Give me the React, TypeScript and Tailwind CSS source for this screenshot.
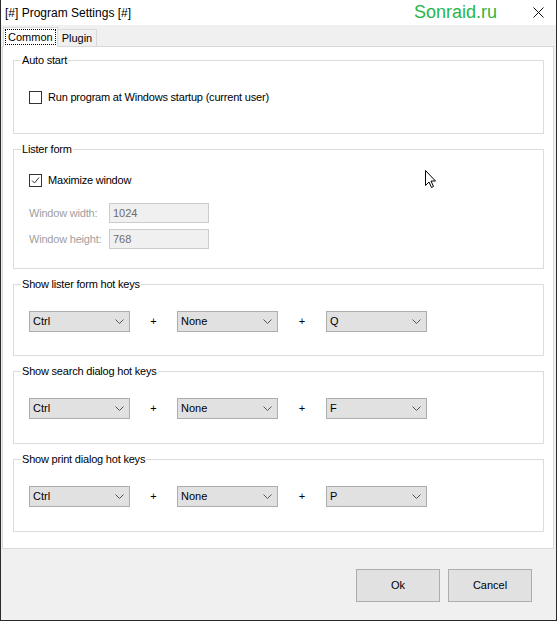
import React from 'react';

const font = { fontFamily: '"Liberation Sans", Arial, sans-serif' };

// Win32-like group box
const GroupBox: React.FC<{ title: string; h: string; children: React.ReactNode }> = ({ title, h, children }) => (
  <fieldset className="border border-[#dcdcdc]">
    <legend className="ml-[7px] px-[1px] text-[11px] leading-[14px] tracking-[-0.2px] text-black">{title}</legend>
    <div className={`${h} px-[15px]`}>{children}</div>
  </fieldset>
);

const CheckBox: React.FC<{ label: string; checked?: boolean }> = ({ label, checked }) => (
  <div className="flex items-center gap-[6px]">
    <div className="w-[13px] h-[13px] border border-[#333] bg-white flex items-center justify-center">
      {checked && (
        <svg width="11" height="11" viewBox="0 0 11 11">
          <path d="M2 5.5 L4.5 8 L9 2.5" stroke="#333" strokeWidth="1" fill="none" />
        </svg>
      )}
    </div>
    <span className="text-[11px] leading-[13px] tracking-[-0.2px] text-black">{label}</span>
  </div>
);

const ComboBox: React.FC<{ value: string }> = ({ value }) => (
  <div className="w-[101px] h-[21px] bg-[#e1e1e1] border border-[#adadad] flex items-center justify-between pl-[3px] pr-[5px]">
    <span className="text-[11px] text-black">{value}</span>
    <svg width="9" height="5" viewBox="0 0 9 5">
      <path d="M0.5 0.5 L4.5 4.5 L8.5 0.5" stroke="#555" strokeWidth="1" fill="none" />
    </svg>
  </div>
);

const HotKeys: React.FC<{ title: string; keyName: string; h: string }> = ({ title, keyName, h }) => (
  <GroupBox title={title} h={h}>
    <div className="flex items-center pt-[20px]">
      <ComboBox value="Ctrl" />
      <span className="w-[47px] text-center text-[11px] text-black">+</span>
      <ComboBox value="None" />
      <span className="w-[48px] text-center text-[11px] text-black">+</span>
      <ComboBox value={keyName} />
    </div>
  </GroupBox>
);

const SizeField: React.FC<{ label: string; value: string }> = ({ label, value }) => (
  <div className="flex items-center">
    <span className="w-[80px] text-[11px] tracking-[-0.2px] text-[#a0a0a0]">{label}</span>
    <div className="w-[100px] h-[20px] bg-[#f0f0f0] border border-[#cccccc] flex items-center pl-[3px]">
      <span className="text-[11px] text-[#6d6d6d]">{value}</span>
    </div>
  </div>
);

export default function App() {
  return (
    <div style={font} className="relative w-[557px] h-[621px] bg-[#f0f0f0] border-l border-r border-b border-[#2b2b2b] flex flex-col overflow-hidden">
      {/* title bar */}
      <div className="h-[25px] bg-white flex items-center justify-between pl-[4px] pr-[12px] shrink-0">
        <span className="text-[12px] text-black">[#] Program Settings [#]</span>
        <div className="flex items-center">
          <span className="text-[18px] text-[#2bb546] mr-[36px]">Sonraid.ru</span>
          <svg width="11" height="11" viewBox="0 0 11 11">
            <path d="M0.5 0.5 L10.5 10.5 M10.5 0.5 L0.5 10.5" stroke="#111" strokeWidth="1" />
          </svg>
        </div>
      </div>

      {/* tabs */}
      <div className="flex items-end h-[21px] pl-[2px] shrink-0">
        <div className="h-[20px] bg-white border border-b-0 border-[#d9d9d9] px-[1px] pt-[1px] -mb-[1px] relative z-10">
          <div className="border border-dotted border-black px-[2px] h-[16px] flex items-center">
            <span className="text-[11px] text-black">Common</span>
          </div>
        </div>
        <div className="h-[17px] bg-[#f0f0f0] border border-b-0 border-l-0 border-[#d9d9d9] px-[4px] flex items-center">
          <span className="text-[11px] text-black">Plugin</span>
        </div>
      </div>

      {/* tab page */}
      <div className="mx-[1px] mr-[2px] h-[503px] bg-white border border-[#d9d9d9] pl-[10px] pr-[9px] pt-[6px] flex flex-col gap-[8px] shrink-0">
        <GroupBox title="Auto start" h="h-[66px]">
          <div className="pt-[24px]">
            <CheckBox label="Run program at Windows startup (current user)" />
          </div>
        </GroupBox>

        <GroupBox title="Lister form" h="h-[112px]">
          <div className="pt-[18px] flex flex-col">
            <CheckBox label="Maximize window" checked />
            <div className="mt-[16px] flex flex-col gap-[6px]">
              <SizeField label="Window width:" value="1024" />
              <SizeField label="Window height:" value="768" />
            </div>
          </div>
        </GroupBox>

        <HotKeys title="Show lister form hot keys" keyName="Q" h="h-[64px]" />
        <HotKeys title="Show search dialog hot keys" keyName="F" h="h-[65px]" />
        <HotKeys title="Show print dialog hot keys" keyName="P" h="h-[65px]" />
      </div>

      {/* buttons */}
      <div className="flex justify-end gap-[8px] pr-[24px] pt-[20px]">
        <button className="w-[84px] h-[33px] bg-[#e1e1e1] border border-[#adadad] text-[11px] text-black">Ok</button>
        <button className="w-[84px] h-[33px] bg-[#e1e1e1] border border-[#adadad] text-[11px] text-black">Cancel</button>
      </div>

      {/* mouse pointer */}
      <svg className="absolute left-[424px] top-[170px]" width="12" height="19" viewBox="0 0 12 19">
        <path d="M0.5 0.5 L0.5 15.5 L4 12 L6.5 17.5 L8.5 16.5 L6 11 L10.5 11 Z" fill="white" stroke="black" strokeWidth="1" />
      </svg>
    </div>
  );
}
